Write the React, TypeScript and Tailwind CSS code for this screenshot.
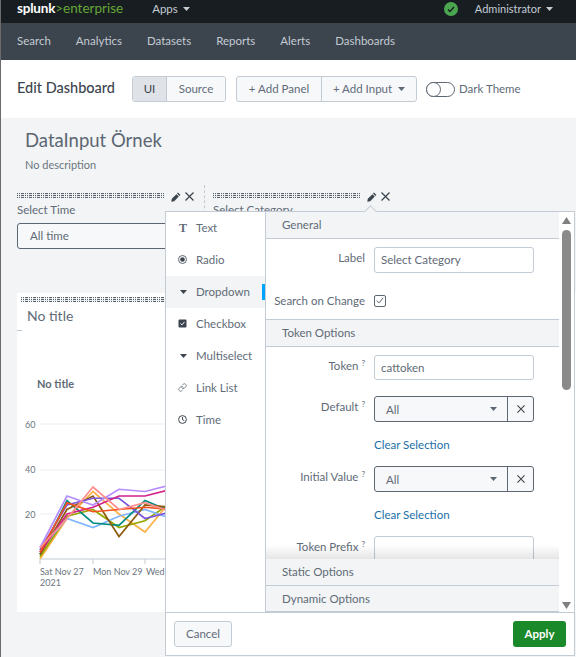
import type { ReactNode } from 'react';
import { Link } from 'lucide-react';

const font = 'font-["Lato","Liberation_Sans",sans-serif]';

const series = [
    { color: '#fbb24a', values: [0, 18, 30, 20, 12, 26] },
    { color: '#97a800', values: [1, 19, 22, 14, 17, 25] },
    { color: '#7eb6ff', values: [4, 18, 14, 19, 22, 18] },
    { color: '#008c80', values: [2, 26, 16, 15, 26, 21] },
    { color: '#8c5b0c', values: [2, 22, 28, 10, 24, 23] },
    { color: '#7b56db', values: [4, 24, 27, 27, 18, 21] },
    { color: '#b58cff', values: [5, 28, 24, 31, 30, 33] },
    { color: '#d41f8c', values: [3, 20, 23, 28, 28, 31] },
    { color: '#f4511e', values: [3, 25, 21, 22, 23, 22] },
    { color: '#ff8f8f', values: [5, 18, 32, 22, 25, 21] },
];

const xPoints = [23, 50, 76, 102, 128, 154];

function toY(value: number) {
    return 266 - value * 2.25;
}

function Caret({ className = 'fill-[#5c6773]' }: { className?: string }) {
    return (
        <svg width="7" height="4" viewBox="0 0 7 4" className={className}>
            <path d="M0 0h7L3.5 4z" />
        </svg>
    );
}

function Close({ size = 9, color = '#3c444d' }: { size?: number; color?: string }) {
    return (
        <svg width={size} height={size} viewBox="0 0 9 9">
            <path d="M.5.5l8 8M8.5.5l-8 8" stroke={color} strokeWidth="1.2" fill="none" />
        </svg>
    );
}

function Pencil() {
    return (
        <svg width="10" height="10" viewBox="0 0 10 10" className="fill-[#3c444d]">
            <path d="M7 .6l2.4 2.4-1 1L6 1.6zM5.4 2.2l2.4 2.4-4.6 4.6L.3 9.7l.5-2.9z" />
        </svg>
    );
}

function DragHandle({ className = '' }: { className?: string }) {
    return (
        <div
            className={`h-[5px] bg-[repeating-linear-gradient(90deg,#59636e_0_1px,transparent_1px_2px,#59636e_2px_3px,transparent_3px_4px,#59636e_4px_7px,transparent_7px_8px)] ${className}`}
        >
            <div className="h-full bg-[repeating-linear-gradient(180deg,transparent_0_1px,rgba(242,244,245,0.9)_1px_2px)]" />
        </div>
    );
}

function Field({ label, help, children }: { label: string; help?: boolean; children: ReactNode }) {
    return (
        <div className="flex items-start">
            <div className="w-[108px] shrink-0 pt-[3px] pr-[9px] text-right text-[11.5px] leading-[16px] text-[#616b77]">
                {label}
                {help && <sup className="ml-[3px] text-[8px]">?</sup>}
            </div>
            {children}
        </div>
    );
}

function SelectBox() {
    return (
        <div className="flex h-[26px] w-[160px] rounded-[3px] border border-[#5c6773] bg-[#f7f8fa]">
            <div className="flex flex-1 items-center justify-between border-r border-[#5c6773] pr-[10px] pl-[11px] text-[11.5px] text-[#616b77]">
                All
                <Caret />
            </div>
            <div className="flex w-[25px] items-center justify-center">
                <Close size={8} />
            </div>
        </div>
    );
}

function SectionHeader({ label, className = '' }: { label: string; className?: string }) {
    return (
        <div className={`flex items-center border-b border-[#c3cbd4] bg-[#f2f4f5] pl-[16px] text-[11.5px] text-[#616b77] ${className}`}>
            {label}
        </div>
    );
}

const menuIcons: Record<string, ReactNode> = {
    Text: <span className="font-['Liberation_Serif',serif] text-[12px] font-bold text-[#616b77]">T</span>,
    Radio: (
        <svg width="9" height="9" viewBox="0 0 9 9">
            <circle cx="4.5" cy="4.5" r="4" fill="none" stroke="#5c6773" />
            <circle cx="4.5" cy="4.5" r="2.3" fill="#3c444d" />
        </svg>
    ),
    Dropdown: <Caret className="fill-[#3c444d]" />,
    Checkbox: (
        <svg width="9" height="9" viewBox="0 0 9 9">
            <rect width="8" height="8" x=".5" y=".5" rx="1" fill="#3c444d" />
            <path d="M2.5 4.5l1.4 1.4 2.6-3" stroke="#fff" fill="none" />
        </svg>
    ),
    Multiselect: <Caret className="fill-[#3c444d]" />,
    'Link List': <Link size={9} strokeWidth={2} color="#5c6773" />,
    Time: (
        <svg width="9" height="9" viewBox="0 0 9 9" fill="none" stroke="#3c444d">
            <circle cx="4.5" cy="4.5" r="3.9" />
            <path d="M4.5 2v2.7l1.8.9" />
        </svg>
    ),
};

function SideMenu() {
    return (
        <div className="w-[100px] shrink-0 border-r border-[#c3cbd4] bg-white">
            {Object.keys(menuIcons).map((name) => (
                <div
                    key={name}
                    className={`relative flex h-[32px] items-center pb-[1px] text-[11.5px] text-[#616b77] ${name === 'Dropdown' ? 'bg-[#f2f4f5]' : ''}`}
                >
                    <span className="flex w-[30px] justify-end pr-[9px] text-[#3c444d]">{menuIcons[name]}</span>
                    {name}
                    {name === 'Dropdown' && (
                        <span className="absolute top-[8px] right-0 h-[16px] w-[3px] bg-[#00a4fd]" />
                    )}
                </div>
            ))}
        </div>
    );
}

function EditorPopover() {
    return (
        <div className="absolute top-[211px] left-[165px] flex h-[445px] w-[410px] flex-col border border-[#c3cbd4] bg-white">
            <span className="absolute -top-[5px] left-[200px] size-[9px] rotate-45 border-t border-l border-[#c3cbd4] bg-[#f2f4f5]" />
            <div className="flex min-h-0 flex-1">
                <SideMenu />
                <div className="flex min-w-0 flex-1">
                    <div className="relative min-w-0 flex-1 overflow-hidden">
                        <SectionHeader label="General" className="h-[27px] pb-[1px]" />
                        <div className="pt-[8px]">
                            <Field label="Label">
                                <div className="flex h-[26px] w-[160px] items-center rounded-[3px] border border-[#c3cbd4] pl-[6px] text-[11.5px] text-[#616b77]">
                                    Select Category
                                </div>
                            </Field>
                            <div className="mt-[19px] flex items-center">
                                <div className="w-[108px] shrink-0 pr-[9px] text-right text-[11.5px] whitespace-nowrap text-[#616b77]">
                                    Search on Change
                                </div>
                                <div className="flex size-[12px] items-center justify-center rounded-[2px] border border-[#5c6773]">
                                    <svg width="8" height="7" viewBox="0 0 8 7" fill="none" stroke="#5c6773">
                                        <path d="M.8 3.5l2.2 2.4L7.2.8" />
                                    </svg>
                                </div>
                            </div>
                        </div>
                        <SectionHeader label="Token Options" className="mt-[10px] h-[28px] border-t pb-[2px]" />
                        <div className="pt-[8px]">
                            <Field label="Token" help>
                                <div className="flex h-[25px] w-[160px] items-center rounded-[3px] border border-[#c3cbd4] pl-[6px] text-[11.5px] text-[#616b77]">
                                    cattoken
                                </div>
                            </Field>
                            <div className="mt-[16px]">
                                <Field label="Default" help>
                                    <SelectBox />
                                </Field>
                            </div>
                            <div className="mt-[16px] pl-[108px] text-[11.5px] leading-[14px] text-[#1a6fa8]">Clear Selection</div>
                            <div className="mt-[14px]">
                                <Field label="Initial Value" help>
                                    <SelectBox />
                                </Field>
                            </div>
                            <div className="mt-[16px] pl-[108px] text-[11.5px] leading-[14px] text-[#1a6fa8]">Clear Selection</div>
                            <div className="mt-[14px]">
                                <Field label="Token Prefix" help>
                                    <div className="h-[26px] w-[160px] rounded-[3px] border border-[#c3cbd4]" />
                                </Field>
                            </div>
                        </div>
                        <div className="absolute right-0 bottom-0 left-0">
                            <div className="h-[14px] bg-gradient-to-b from-transparent to-[#0000001a]" />
                            <SectionHeader label="Static Options" className="h-[27px]" />
                            <SectionHeader label="Dynamic Options" className="h-[26px]" />
                        </div>
                    </div>
                    <div className="flex w-[15px] shrink-0 flex-col items-center bg-white pt-[5px] pb-[3px]">
                        <svg width="9" height="7" viewBox="0 0 9 7" className="fill-[#7f7f7f]">
                            <path d="M4.5 0L9 7H0z" />
                        </svg>
                        <div className="mt-[6px] h-[160px] w-[9px] rounded-full bg-[#8a8a8a]" />
                        <svg width="9" height="7" viewBox="0 0 9 7" className="mt-auto fill-[#7f7f7f]">
                            <path d="M0 0h9L4.5 7z" />
                        </svg>
                    </div>
                </div>
            </div>
            <div className="flex h-[43px] shrink-0 items-center justify-between border-t border-[#c3cbd4] px-[8px]">
                <div className="flex h-[26px] w-[58px] items-center justify-center rounded-[3px] border border-[#c3cbd4] bg-[#f7f8fa] text-[11.5px] text-[#616b77]">
                    Cancel
                </div>
                <div className="flex h-[26px] w-[53px] items-center justify-center rounded-[3px] bg-[#1a8929] text-[11.5px] font-bold text-white">
                    Apply
                </div>
            </div>
        </div>
    );
}

function Chart() {
    return (
        <svg width="150" height="300" viewBox="0 0 150 300" className={`absolute top-0 left-0 overflow-hidden ${font}`}>
            {[131, 177, 221].map((y) => (
                <line key={y} x1="23" x2="150" y1={y} y2={y} stroke="#eceef0" strokeWidth="1" />
            ))}
            <line x1="23" x2="150" y1="266" y2="266" stroke="#c3cbd4" />
            {[23, 76, 128].map((x) => (
                <line key={x} x1={x} x2={x} y1="266" y2="271" stroke="#c3cbd4" />
            ))}
            {series.map((s) => (
                <polyline
                    key={s.color}
                    fill="none"
                    stroke={s.color}
                    strokeWidth="1.7"
                    points={s.values.map((v, i) => `${xPoints[i]},${toY(v)}`).join(' ')}
                />
            ))}
            <g fontSize="9" fill="#6b7580">
                <text x="8" y="135">60</text>
                <text x="8" y="180">40</text>
                <text x="8" y="225">20</text>
                <text x="23" y="282">Sat Nov 27</text>
                <text x="23" y="293">2021</text>
                <text x="76" y="282">Mon Nov 29</text>
                <text x="129" y="282">Wed</text>
            </g>
        </svg>
    );
}

export default function App() {
    return (
        <div className={`relative h-[657px] w-[576px] overflow-hidden bg-[#f2f4f5] ${font}`}>
            <div className="flex h-[23px] items-center justify-between bg-[#171d21] pr-[23px] pb-[5px] pl-[17px] text-[11.5px] text-[#c3cbd4]">
                <div className="flex items-center">
                    <span className="text-[13.5px] leading-none font-bold tracking-[-0.2px] text-white">splunk</span>
                    <span className="text-[13.5px] leading-none text-[#65a637]">&gt;enterprise</span>
                    <span className="ml-[29px] flex items-center gap-[5px]">
                        Apps <Caret className="fill-[#c3cbd4]" />
                    </span>
                </div>
                <div className="flex items-center">
                    <span className="flex size-[14px] items-center justify-center rounded-full bg-[#4aa64f]">
                        <svg width="8" height="7" viewBox="0 0 8 7" fill="none" stroke="#171d21" strokeWidth="1.4">
                            <path d="M1 3.5l2 2L7 1" />
                        </svg>
                    </span>
                    <span className="ml-[17px] flex items-center gap-[5px] text-[11px]">
                        Administrator <Caret className="fill-[#c3cbd4]" />
                    </span>
                </div>
            </div>
            <nav className="flex h-[37px] items-center gap-[25px] bg-[#3c444d] pb-[1px] pl-[17px] text-[11.5px] text-[#c3cbd4]">
                {['Search', 'Analytics', 'Datasets', 'Reports', 'Alerts', 'Dashboards'].map((item) => (
                    <span key={item}>{item}</span>
                ))}
            </nav>
            <header className="flex h-[58px] items-center bg-white pl-[17px]">
                <h1 className="-mt-[2px] text-[14.5px] font-medium text-[#3c444d]">Edit Dashboard</h1>
                <div className="ml-[17px] flex h-[26px] overflow-hidden rounded-[3px] border border-[#c3cbd4] text-[11.5px] text-[#616b77]">
                    <span className="flex w-[34px] items-center justify-center border-r border-[#c3cbd4] bg-[#dfe3e7] text-[#3c444d]">UI</span>
                    <span className="flex w-[58px] items-center justify-center bg-[#f7f8fa]">Source</span>
                </div>
                <div className="ml-[10px] flex h-[26px] rounded-[3px] border border-[#c3cbd4] bg-[#f7f8fa] text-[11.5px] text-[#616b77]">
                    <span className="flex w-[85px] items-center justify-center border-r border-[#c3cbd4]">+ Add Panel</span>
                    <span className="flex w-[94px] items-center justify-center gap-[6px]">
                        + Add Input <Caret />
                    </span>
                </div>
                <div className="ml-[9px] flex h-[15px] w-[29px] items-center rounded-full border border-[#5c6773] bg-white">
                    <span className="ml-[-1px] size-[15px] rounded-full border border-[#5c6773] bg-white" />
                </div>
                <span className="ml-[4px] text-[11.5px] text-[#616b77]">Dark Theme</span>
            </header>
            <main>
                <div className="pt-[10px] pl-[25px]">
                    <h2 className="text-[18.5px] leading-[24px] text-[#5c6773]">DataInput Örnek</h2>
                    <p className="mt-[6px] text-[11px] leading-[14px] text-[#6b7580]">No description</p>
                </div>
                <div className="mt-[13px] flex pl-[17px]">
                    <div className="w-[188px] border-r border-dashed border-[#c3cbd4] pt-[3px]">
                        <div className="flex h-[14px] items-center">
                            <DragHandle className="w-[148px]" />
                            <span className="mt-[3px] ml-[6px] flex items-center gap-[4px]">
                                <Pencil />
                                <Close />
                            </span>
                        </div>
                        <div className="mt-[1px] text-[11.5px] leading-[14px] text-[#616b77]">Select Time</div>
                        <div className="mt-[6px] flex h-[26px] w-[187px] items-center rounded-[3px] border border-[#5c6773] bg-[#f7f8fa] pl-[12px] text-[11.5px] text-[#616b77]">
                            All time
                        </div>
                    </div>
                    <div className="pt-[3px] pl-[8px]">
                        <div className="flex h-[14px] items-center">
                            <DragHandle className="w-[148px]" />
                            <span className="mt-[3px] ml-[6px] flex items-center gap-[4px]">
                                <Pencil />
                                <Close />
                            </span>
                        </div>
                        <div className="mt-[1px] text-[11.5px] leading-[14px] text-[#616b77]">Select Category</div>
                    </div>
                </div>
                <section className="relative mt-[44px] ml-[17px] h-[319px] bg-white pt-[4px]">
                    <DragHandle className="mx-[4px] w-[144px]" />
                    <div className="mt-[5px] pl-[10px] text-[14px] leading-[18px] text-[#616b77]">No title</div>
                    <div className="mt-[5px] h-px w-[5px] bg-[#c3cbd4]" />
                    <div className="mt-[46px] pl-[20px] text-[11px] leading-[14px] font-bold text-[#616b77]">No title</div>
                    <Chart />
                </section>
            </main>
            <EditorPopover />
            <div className="absolute inset-y-0 left-0 w-px bg-[#6b6b6b]" />
        </div>
    );
}
